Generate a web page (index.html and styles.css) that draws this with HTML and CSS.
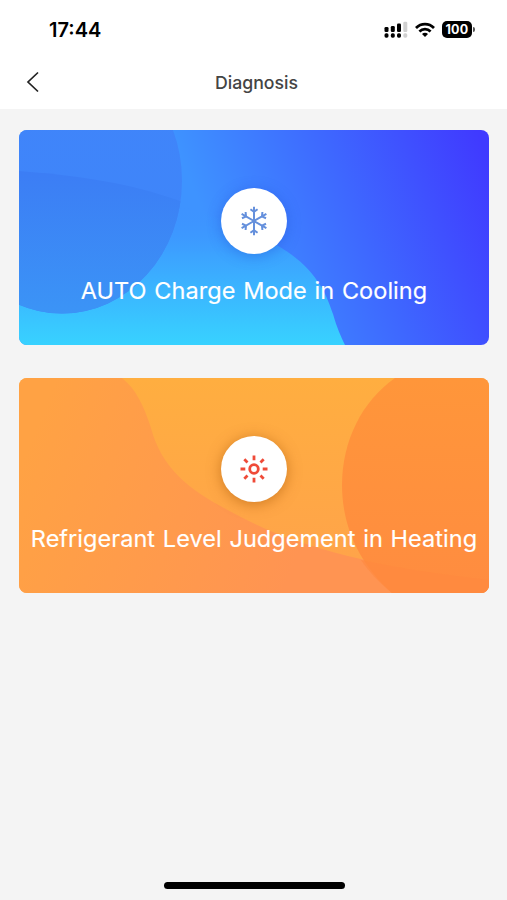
FILE: index.html
```html
<!DOCTYPE html>
<html lang="en">
<head>
	<meta charset="utf-8">
	<title>Diagnosis</title>
	<meta name="viewport" content="width=device-width, initial-scale=1">
	<link rel="stylesheet" href="styles.css">
</head>
<body>
	<header>
		<div class="status">
			<span class="time">17:44</span>
			<div class="status-icons">
				<svg width="24" height="18" viewBox="0 0 24 18">
					<g fill="#000">
						<rect x="0.5" y="6" width="4" height="5" rx="1.3"/>
						<rect x="6.8" y="5" width="4" height="6" rx="1.3"/>
						<rect x="13" y="2.5" width="4" height="8.5" rx="1.3"/>
						<rect x="0.5" y="12.3" width="4" height="4.4" rx="1.6"/>
						<rect x="6.8" y="12.3" width="4" height="4.4" rx="1.6"/>
						<rect x="13" y="12.3" width="4" height="4.4" rx="1.6"/>
					</g>
					<g fill="#d0d0d0">
						<rect x="19.3" y="0.8" width="4" height="10.2" rx="1.3"/>
						<rect x="19.3" y="12.3" width="4" height="4.4" rx="1.6"/>
					</g>
				</svg>
				<svg class="wifi" width="20" height="16" viewBox="0 0 20 16">
					<g fill="none" stroke="#000" stroke-width="2.7">
						<path d="M1 6 C6 0.8 14 0.8 19 6"/>
						<path d="M4.4 9.5 C7.6 6.4 12.4 6.4 15.6 9.5"/>
					</g>
					<path d="M7 11.9 C8.7 10.4 11.3 10.4 13 11.9 L10 15 Z"/>
				</svg>
				<div class="battery">100</div>
			</div>
		</div>
		<nav>
			<a href="#" class="back" aria-label="Back">
				<svg width="14" height="22" viewBox="0 0 14 22"><path d="M12 1.5 L2 11 L12 20.5" fill="none" stroke="#222" stroke-width="1.7"/></svg>
			</a>
			<h1>Diagnosis</h1>
		</nav>
	</header>

	<main>
		<a href="#" class="card cooling">
			<svg class="bg" viewBox="0 0 470 215" preserveAspectRatio="none">
				<defs>
					<linearGradient id="sky" gradientUnits="userSpaceOnUse" x1="165" y1="35" x2="430" y2="-70">
						<stop offset="0" stop-color="#3e93ff"/>
						<stop offset="0.5" stop-color="#3e67ff"/>
						<stop offset="1" stop-color="#403aff"/>
					</linearGradient>
					<linearGradient id="wave" gradientUnits="userSpaceOnUse" x1="0" y1="75" x2="0" y2="215">
						<stop offset="0" stop-color="#3c91ff" stop-opacity="0"/>
						<stop offset="0.35" stop-color="#3ca2ff"/>
						<stop offset="1" stop-color="#38d2ff"/>
					</linearGradient>
					<linearGradient id="ball" x1="0" y1="0" x2="0" y2="1">
						<stop offset="0" stop-color="#4084fb"/>
						<stop offset="1" stop-color="#3e86f8"/>
					</linearGradient>
					<linearGradient id="ballLow" gradientUnits="userSpaceOnUse" x1="0" y1="40" x2="0" y2="184">
						<stop offset="0" stop-color="#3c7df5"/>
						<stop offset="1" stop-color="#3b94f6"/>
					</linearGradient>
					<clipPath id="ballClip"><ellipse cx="43" cy="50.5" rx="120" ry="133"/></clipPath>
				</defs>
				<rect width="470" height="215" fill="url(#sky)"/>
				<path d="M0 41 C95 48 205 84 261 117 C298 139 308 166 314 184 C318 198 322 207 326 215 L0 215 Z" fill="url(#wave)"/>
				<ellipse cx="43" cy="50.5" rx="120" ry="133" fill="url(#ball)"/>
				<path clip-path="url(#ballClip)" d="M0 41 C95 48 140 62 190 82 L190 215 L0 215 Z" fill="url(#ballLow)"/>
			</svg>
			<div class="icon">
				<!-- snowflake: one arm repeated six times -->
				<svg width="30" height="30" viewBox="-15 -15 30 30">
					<defs>
						<path id="arm" d="M0 0 V-14.3 M-3.6 -11.8 L0 -9.2 L3.6 -11.8"/>
					</defs>
					<g fill="none" stroke="#6590dc" stroke-width="2">
						<use href="#arm"/>
						<use href="#arm" transform="rotate(60)"/>
						<use href="#arm" transform="rotate(120)"/>
						<use href="#arm" transform="rotate(180)"/>
						<use href="#arm" transform="rotate(240)"/>
						<use href="#arm" transform="rotate(300)"/>
					</g>
				</svg>
			</div>
			<span class="label">AUTO Charge Mode in Cooling</span>
		</a>

		<a href="#" class="card heating">
			<svg class="bg" viewBox="0 0 470 215" preserveAspectRatio="none">
				<defs>
					<linearGradient id="amber" x1="0" y1="0" x2="0" y2="1">
						<stop offset="0" stop-color="#ffae40"/>
						<stop offset="1" stop-color="#ffa24b"/>
					</linearGradient>
					<linearGradient id="dune" gradientUnits="userSpaceOnUse" x1="0" y1="90" x2="270" y2="200">
						<stop offset="0" stop-color="#ffa244"/>
						<stop offset="1" stop-color="#ff9452"/>
					</linearGradient>
					<linearGradient id="sun" x1="0" y1="0" x2="0" y2="1">
						<stop offset="0" stop-color="#ff963a"/>
						<stop offset="1" stop-color="#ff8c40"/>
					</linearGradient>
				</defs>
				<rect width="470" height="215" fill="url(#amber)"/>
				<path d="M0 0 H103 C117 11 125 28 132 50 C145 99 182 119 234 145 C280 168 360 190 470 203 V215 H0 Z" fill="url(#dune)"/>
				<path d="M376 0 H470 V215 H373 C340 186 323 148 323 107 C323 63 343 23 376 0 Z" fill="url(#sun)"/>
				<path d="M342 182 C385 191 425 197 470 202 V215 H373 C360 204 350 194 342 182 Z" fill="#ff8840" opacity="0.6"/>
			</svg>
			<div class="icon">
				<svg width="30" height="30" viewBox="-15 -15 30 30">
					<g fill="none" stroke="#ef4a38" stroke-width="2.8">
						<circle r="4.3"/>
						<path d="M0 -13.5 V-8.7 M0 8.7 V13.5 M-13.5 0 H-8.7 M8.7 0 H13.5 M-9.7 -9.7 L-6.5 -6.5 M6.5 6.5 L9.7 9.7 M-9.7 9.7 L-6.5 6.5 M6.5 -6.5 L9.7 -9.7"/>
					</g>
				</svg>
			</div>
			<span class="label">Refrigerant Level Judgement in Heating</span>
		</a>
	</main>

	<div class="home-bar"></div>
</body>
</html>
```

FILE: styles.css
```css
* {
	box-sizing: border-box;
}
body {
	margin: 0;
	height: 900px;
	display: flex;
	flex-direction: column;
	background-color: #f4f4f4;
	font-family: Inter, "Liberation Sans", sans-serif;
	overflow: hidden;
}
header {
	height: 109px;
	background-color: #fff;
}
.status {
	display: flex;
	justify-content: space-between;
	align-items: center;
	height: 59px;
	padding: 0 32px 0 49px;
}
.time {
	font-size: 20px;
	font-weight: 600;
	color: #000;
}
.status-icons {
	display: flex;
	align-items: center;
}
.wifi {
	margin: 0 7px 0 7px;
}
.battery {
	width: 30px;
	height: 17px;
	border-radius: 5px;
	background-color: #000;
	color: #fff;
	font-size: 12.5px;
	font-weight: 700;
	line-height: 17px;
	text-align: center;
	letter-spacing: 0.3px;
	position: relative;
	margin-right: 3px;
}
/* battery tip */
.battery::after {
	content: "";
	position: absolute;
	right: -3px;
	top: 6px;
	width: 2px;
	height: 5px;
	border-radius: 0 2px 2px 0;
	background-color: #555;
}
nav {
	display: grid;
	grid-template-columns: 60px 1fr 60px;
	align-items: center;
	height: 46px;
}
.back {
	display: flex;
	padding-left: 26px;
}
h1 {
	margin: 0;
	font-size: 17.7px;
	font-weight: 500;
	color: #444;
	text-align: center;
	padding-left: 6px;
}
main {
	flex: 1;
	display: flex;
	flex-direction: column;
	gap: 33px;
	padding: 21px 18px 0 19px;
}
.card {
	display: flex;
	flex-direction: column;
	align-items: center;
	height: 215px;
	padding-top: 58px;
	border-radius: 8px;
	overflow: hidden;
	position: relative;
	color: #fff;
	text-decoration: none;
}
.bg {
	position: absolute;
	left: 0;
	top: 0;
	width: 100%;
	height: 100%;
}
.icon {
	display: flex;
	justify-content: center;
	align-items: center;
	width: 66px;
	height: 66px;
	border-radius: 50%;
	background-color: #fff;
	position: relative;
}
.cooling .icon {
	box-shadow: 0 2px 14px rgba(30, 70, 200, 0.35);
}
.heating .icon {
	box-shadow: 0 2px 14px rgba(160, 80, 0, 0.5);
}
.label {
	position: relative;
	margin-top: 22px;
	font-size: 23.5px;
	line-height: 30px;
	white-space: nowrap;
	letter-spacing: 0.04px;
	word-spacing: 1.1px;
	-webkit-text-stroke: 0.15px #fff;
}
.home-bar {
	align-self: center;
	width: 181px;
	height: 7px;
	margin: 0 0 11px 2px;
	border-radius: 4px;
	background-color: #000;
}
```
